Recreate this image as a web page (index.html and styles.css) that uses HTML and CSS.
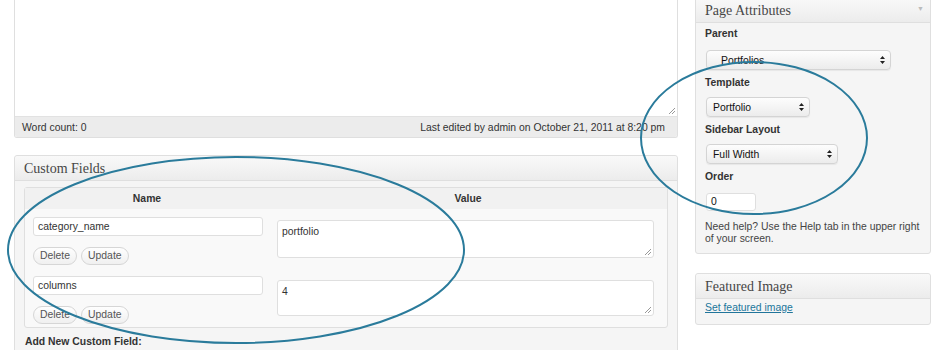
FILE: index.html
```html
<!DOCTYPE html>
<html>
<head>
<meta charset="utf-8">
<title>Edit Page</title>
<link rel="stylesheet" href="styles.css">
</head>
<body>
<div class="wrap">
  <div class="main">
    <div class="editor">
      <div class="editor-area">
        <svg class="grip" width="8" height="8" viewBox="0 0 8 8"><path d="M7 1L1 7M7 4L4 7" stroke="#999" stroke-width="1"/></svg>
      </div>
      <div class="status">
        <span>Word count: 0</span>
        <span>Last edited by admin on October 21, 2011 at 8:20 pm</span>
      </div>
    </div>

    <div class="postbox custom">
      <h3 class="hndle">Custom Fields</h3>
      <div class="inside">
        <div class="cf-table">
          <div class="cf-head">
            <div class="col-name">Name</div>
            <div class="col-value">Value</div>
          </div>
          <div class="cf-row">
            <div class="col-name">
              <div class="text-input">category_name</div>
              <div class="btns"><span class="btn">Delete</span><span class="btn">Update</span></div>
            </div>
            <div class="col-value">
              <div class="textarea">portfolio<svg class="grip" width="8" height="8" viewBox="0 0 8 8"><path d="M7 1L1 7M7 4L4 7" stroke="#999" stroke-width="1"/></svg></div>
            </div>
          </div>
          <div class="cf-row">
            <div class="col-name">
              <div class="text-input">columns</div>
              <div class="btns"><span class="btn">Delete</span><span class="btn">Update</span></div>
            </div>
            <div class="col-value">
              <div class="textarea">4<svg class="grip" width="8" height="8" viewBox="0 0 8 8"><path d="M7 1L1 7M7 4L4 7" stroke="#999" stroke-width="1"/></svg></div>
            </div>
          </div>
        </div>
        <p class="add-new">Add New Custom Field:</p>
      </div>
    </div>
  </div>

  <div class="side">
    <div class="postbox attrs">
      <h3 class="hndle">Page Attributes <span class="toggle">&#9660;</span></h3>
      <div class="inside">
        <p class="label">Parent</p>
        <div class="select sel-parent"><span class="sel-text indent">Portfolios</span><span class="arrows"><svg width="5" height="8" viewBox="0 0 5 8"><path d="M2.5 0L5 3H0Z M2.5 8L5 5H0Z" fill="#222"/></svg></span></div>
        <p class="label">Template</p>
        <div class="select sel-template"><span class="sel-text">Portfolio</span><span class="arrows"><svg width="5" height="8" viewBox="0 0 5 8"><path d="M2.5 0L5 3H0Z M2.5 8L5 5H0Z" fill="#222"/></svg></span></div>
        <p class="label">Sidebar Layout</p>
        <div class="select sel-layout"><span class="sel-text">Full Width</span><span class="arrows"><svg width="5" height="8" viewBox="0 0 5 8"><path d="M2.5 0L5 3H0Z M2.5 8L5 5H0Z" fill="#222"/></svg></span></div>
        <p class="label">Order</p>
        <div class="order-input">0</div>
        <p class="help">Need help? Use the Help tab in the upper right of your screen.</p>
      </div>
    </div>

    <div class="postbox featured">
      <h3 class="hndle">Featured Image</h3>
      <div class="inside">
        <a class="link" href="#">Set featured image</a>
      </div>
    </div>
  </div>
</div>

<svg class="annot" width="940" height="350" viewBox="0 0 940 350">
  <ellipse cx="236" cy="250" rx="228" ry="93" fill="none" stroke="#2a7b9b" stroke-width="2"/>
  <ellipse cx="754" cy="138" rx="113" ry="76" fill="none" stroke="#2a7b9b" stroke-width="2"/>
</svg>
</body>
</html>
```

FILE: styles.css
```css
html, body {
  margin: 0;
  padding: 0;
  background: #fff;
}
body {
  font-family: "Liberation Sans", Arial, sans-serif;
  font-size: 10.4px;
  color: #333;
  width: 940px;
  height: 350px;
  overflow: hidden;
  position: relative;
}
.wrap {
  display: flex;
  padding-left: 14px;
}
.main {
  width: 664px;
}
.side {
  width: 236px;
  margin-left: 17px;
  margin-top: -3px;
}

/* editor */
.editor {
  border: 1px solid #dfdfdf;
  border-top: none;
  border-radius: 0 0 3px 3px;
  overflow: hidden;
}
.editor-area {
  height: 116px;
  background: #fff;
  position: relative;
}
.grip {
  position: absolute;
  right: 1px;
  bottom: 1px;
}
.status {
  height: 20px;
  background: #ececec;
  border-top: 1px solid #e2e2e2;
  display: flex;
  justify-content: space-between;
  align-items: center;
  padding: 0 12px 0 7px;
  color: #333;
}

/* postbox */
.postbox {
  border: 1px solid #dfdfdf;
  border-radius: 3px;
  background: #f5f5f5;
}
.hndle {
  margin: 0;
  height: 24px;
  line-height: 26px;
  padding: 0 9px;
  font-family: "Liberation Serif", Georgia, serif;
  font-weight: normal;
  font-size: 14px;
  color: #464646;
  background: linear-gradient(#f9f9f9, #ececec);
  border-bottom: 1px solid #dfdfdf;
  border-radius: 3px 3px 0 0;
  display: flex;
  justify-content: space-between;
}
.toggle {
  font-family: "Liberation Sans", sans-serif;
  font-size: 7px;
  color: #bbb;
  line-height: 22px;
  margin-right: -3px;
}

/* custom fields */
.custom {
  margin-top: 17px;
}
.custom .inside {
  padding: 6px 9px 0;
  height: 170px;
}
.cf-table {
  border: 1px solid #dfdfdf;
  border-radius: 3px;
  background: #f9f9f9;
}
.cf-head {
  display: flex;
  height: 21px;
  align-items: center;
  background: #f1f1f1;
  font-weight: bold;
  color: #333;
}
.cf-head .col-name, .cf-head .col-value {
  text-align: center;
}
.col-name {
  width: 244px;
}
.col-value {
  flex: 1;
}
.cf-row {
  display: flex;
  height: 59px;
}
.cf-row .col-name {
  padding: 8px 0 0 8px;
  box-sizing: border-box;
}
.cf-row .col-value {
  padding: 11px 13px 0 8px;
}
.text-input {
  width: 230px;
  height: 19px;
  box-sizing: border-box;
  background: #fff;
  border: 1px solid #dfdfdf;
  border-radius: 3px;
  padding: 0 4px;
  line-height: 17px;
  color: #333;
}
.btns {
  display: flex;
  gap: 4px;
  margin-top: 11px;
}
.btn {
  display: inline-block;
  height: 18px;
  box-sizing: border-box;
  padding: 0 6px;
  line-height: 16px;
  border: 1px solid #d6d6d6;
  border-radius: 9px;
  background: linear-gradient(#fefefe, #f0f0f0);
  color: #555;
}
.textarea {
  position: relative;
  height: 38px;
  box-sizing: border-box;
  background: #fff;
  border: 1px solid #dfdfdf;
  border-radius: 3px;
  padding: 5px 4px;
  color: #333;
}
.cf-row + .cf-row .col-value {
  padding-top: 12px;
}
.cf-row + .cf-row .textarea {
  height: 36px;
}
.add-new {
  margin: 8px 0 0 1px;
  font-weight: bold;
  color: #333;
}

/* page attributes */
.attrs .inside {
  padding: 5px 9px 8px;
}
.label {
  margin: 0;
  font-weight: bold;
  line-height: 12px;
  color: #333;
}
.select {
  display: flex;
  align-items: center;
  justify-content: space-between;
  height: 20px;
  box-sizing: border-box;
  margin: 8px 0 7px 1px;
  border: 1px solid #d4d4d4;
  border-radius: 4px;
  background: linear-gradient(#fdfdfd, #ececec);
  box-shadow: 0 1px 1px rgba(0,0,0,0.06);
  color: #111;
}
.select.sel-parent {
  margin-top: 10px;
}
.sel-text {
  padding-left: 6px;
}
.sel-text.indent {
  padding-left: 14px;
}
.arrows {
  display: flex;
  align-items: center;
  height: 100%;
  padding: 0 5px;
}
.sel-parent { width: 185px; }
.sel-template { width: 104px; }
.sel-layout { width: 132px; }
.order-input {
  width: 50px;
  height: 18px;
  box-sizing: border-box;
  margin: 10px 0 0 1px;
  background: #fff;
  border: 1px solid #dfdfdf;
  border-radius: 3px;
  line-height: 16px;
  padding-left: 4px;
  color: #111;
}
.help {
  margin: 10px 0 0;
  line-height: 12px;
  color: #444;
}

/* featured */
.featured {
  margin-top: 19px;
}
.featured .inside {
  padding: 3px 9px 5px;
  height: 17px;
}
.link {
  color: #21759b;
  text-decoration: underline;
}

.annot {
  position: absolute;
  left: 0;
  top: 0;
  pointer-events: none;
}
```
